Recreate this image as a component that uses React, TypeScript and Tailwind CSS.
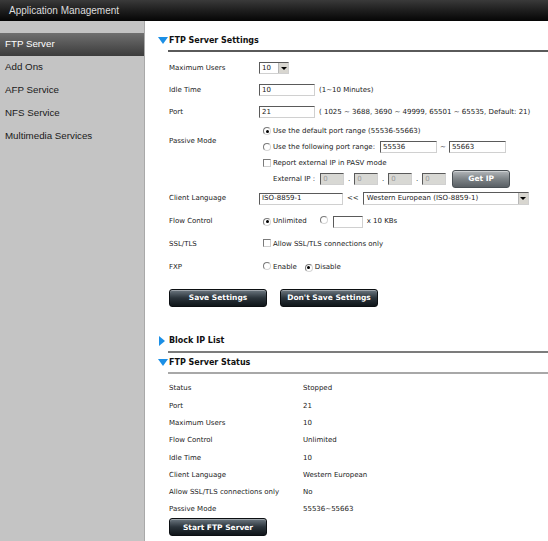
import React from "react";

const Radio = ({ checked }: { checked?: boolean }) => (
  <span className="inline-flex w-[8px] h-[8px] rounded-full border border-t-[#7a7a7a] border-l-[#7a7a7a] border-r-[#d6d6d6] border-b-[#d6d6d6] bg-white items-center justify-center shrink-0">
    {checked && <span className="w-[3px] h-[3px] rounded-full bg-black" />}
  </span>
);

const Check = () => (
  <span className="inline-block w-[8px] h-[8px] border border-t-[#7a7a7a] border-l-[#7a7a7a] border-r-[#cfcfcf] border-b-[#cfcfcf] bg-white shrink-0" />
);

const Input = ({ w, value, disabled }: { w: string; value: string; disabled?: boolean }) => (
  <div
    className={
      "h-[12px] border border-t-[#5a5a5a] border-l-[#5a5a5a] border-r-[#d0d0d0] border-b-[#d0d0d0] flex items-center pl-[2px] leading-none shrink-0 " +
      w +
      (disabled ? " bg-[#d8d8d4] text-[#9a9a9a]" : " bg-white text-[#1a1a1a]")
    }
  >
    {value}
  </div>
);

const Arrow = () => (
  <span className="w-[10px] h-full bg-[#d8d6d0] border-l border-[#b8b8b8] flex items-center justify-center shrink-0">
    <span className="w-0 h-0 border-l-[3px] border-r-[3px] border-t-[3px] border-l-transparent border-r-transparent border-t-black" />
  </span>
);

const DarkButton = ({ children, w }: { children: React.ReactNode; w: string }) => (
  <div
    className={
      "h-[18px] rounded-[3px] border border-[#0c0f12] bg-linear-to-b from-[#6e7982] via-[#2b343b] to-[#10161a] text-white font-bold text-[7.5px] flex items-center justify-center shadow-[inset_0_1px_0_rgba(255,255,255,0.35)] shrink-0 " +
      w
    }
  >
    {children}
  </div>
);

const DownTri = () => (
  <span className="w-0 h-0 border-l-[5px] border-r-[5px] border-t-[7px] border-l-transparent border-r-transparent border-t-[#1b8fe6] mr-px" />
);

const RightTri = () => (
  <span className="w-0 h-0 border-t-[5px] border-b-[5px] border-l-[6px] border-t-transparent border-b-transparent border-l-[#1b8fe6] mr-[4px] ml-px" />
);

const Row = ({ label, h, children }: { label: string; h: string; children?: React.ReactNode }) => (
  <div className={"flex items-center " + h}>
    <div className="w-[90px] shrink-0">{label}</div>
    <div className="flex items-center">{children}</div>
  </div>
);

const StatusRow = ({ label, value }: { label: string; value: string }) => (
  <div className="flex items-center h-[17.3px]">
    <div className="w-[134px] shrink-0">{label}</div>
    <div>{value}</div>
  </div>
);

export default function App() {
  const side = ["FTP Server", "Add Ons", "AFP Service", "NFS Service", "Multimedia Services"];
  return (
    <div className="w-[548px] h-[541px] bg-white flex flex-col overflow-hidden font-['DejaVu_Sans',sans-serif] text-[7px] text-[#1a1a1a]">
      <div className="h-[21px] shrink-0 bg-linear-to-b from-[#3a3a3a] to-[#060606] flex items-center pl-[9px] text-[10px] text-[#dcdcdc] font-['Liberation_Sans',sans-serif]">
        Application Management
      </div>
      <div className="flex flex-1 min-h-0">
        <aside className="w-[145px] shrink-0 bg-[#c4c4c4] border-r border-[#a9a9a9] pt-[12px] font-['Liberation_Sans',sans-serif] text-[9.75px] text-[#1a1a1a]">
          {side.map((s, i) => (
            <div
              key={s}
              className={
                "h-[23px] flex items-center pl-[5px] " +
                (i === 0 ? "bg-linear-to-b from-[#707070] to-[#3c3c3c] text-white" : "")
              }
            >
              {s}
            </div>
          ))}
        </aside>
        <main className="flex-1 min-w-0">
          <div className="mt-[10px] ml-[13px] h-[19px] flex items-center font-bold text-[8px] text-[#111]">
            <DownTri />
            FTP Server Settings
          </div>
          <div className="ml-[23px] h-[2px] bg-[#5a5a5a]" />

          <div className="pl-[24px] pt-[5px]">
            <Row label="Maximum Users" h="h-[22px]">
              <div className="h-[12px] w-[30px] border border-t-[#5a5a5a] border-l-[#5a5a5a] border-r-[#d0d0d0] border-b-[#d0d0d0] bg-white flex items-center">
                <span className="flex-1 pl-[2px]">10</span>
                <Arrow />
              </div>
            </Row>
            <Row label="Idle Time" h="h-[22px]">
              <Input w="w-[56px]" value="10" />
              <span className="ml-[4px]">(1~10 Minutes)</span>
            </Row>
            <Row label="Port" h="h-[22px]">
              <Input w="w-[56px]" value="21" />
              <span className="ml-[4px] whitespace-nowrap">( 1025 ~ 3688, 3690 ~ 49999, 65501 ~ 65535, Default: 21)</span>
            </Row>
            <div className="flex h-[64px]">
              <div className="w-[90px] shrink-0 pt-[13px]">Passive Mode</div>
              <div className="flex flex-col pl-[4px]">
                <div className="h-[16px] flex items-center">
                  <Radio checked />
                  <span className="ml-[2px]">Use the default port range (55536-55663)</span>
                </div>
                <div className="h-[16px] flex items-center">
                  <Radio />
                  <span className="ml-[2px]">Use the following port range:</span>
                  <div className="ml-[5px]"><Input w="w-[57px]" value="55536" /></div>
                  <span className="mx-[3px]">~</span>
                  <Input w="w-[57px]" value="55663" />
                </div>
                <div className="h-[16px] flex items-center">
                  <Check />
                  <span className="ml-[2px]">Report external IP in PASV mode</span>
                </div>
                <div className="h-[16px] flex items-center pl-[10px]">
                  <span>External IP :</span>
                  <div className="ml-[5px] flex items-center">
                    <Input w="w-[24px]" value="0" disabled />
                    <span className="w-[10px] text-center">.</span>
                    <Input w="w-[24px]" value="0" disabled />
                    <span className="w-[10px] text-center">.</span>
                    <Input w="w-[24px]" value="0" disabled />
                    <span className="w-[10px] text-center">.</span>
                    <Input w="w-[24px]" value="0" disabled />
                  </div>
                  <div className="ml-[6px] w-[58px] h-[18px] rounded-[3px] border border-[#4a5055] bg-linear-to-b from-[#b3b7ba] via-[#7d8387] to-[#5a6065] text-white font-bold text-[7.5px] flex items-center justify-center shadow-[inset_0_1px_0_rgba(255,255,255,0.4)]">
                    Get IP
                  </div>
                </div>
              </div>
            </div>
            <Row label="Client Language" h="h-[23px]">
              <Input w="w-[84px]" value="ISO-8859-1" />
              <span className="ml-[4px] mr-[4px]">&lt;&lt;</span>
              <div className="h-[13px] w-[166px] border border-t-[#5a5a5a] border-l-[#5a5a5a] border-r-[#d0d0d0] border-b-[#d0d0d0] bg-white flex items-center">
                <span className="flex-1 pl-[3px]">Western European (ISO-8859-1)</span>
                <Arrow />
              </div>
            </Row>
            <Row label="Flow Control" h="h-[23px]">
              <span className="ml-[4px]"><Radio checked /></span>
              <span className="ml-[2px]">Unlimited</span>
              <span className="ml-[13px]"><Radio /></span>
              <div className="ml-[5px]"><Input w="w-[30px]" value="" /></div>
              <span className="ml-[4px]">x 10 KBs</span>
            </Row>
            <Row label="SSL/TLS" h="h-[23px]">
              <span className="ml-[4px]"><Check /></span>
              <span className="ml-[2px]">Allow SSL/TLS connections only</span>
            </Row>
            <Row label="FXP" h="h-[23px]">
              <span className="ml-[4px]"><Radio /></span>
              <span className="ml-[2px]">Enable</span>
              <span className="ml-[8px]"><Radio checked /></span>
              <span className="ml-[2px]">Disable</span>
            </Row>
            <div className="flex gap-[13px] mt-[10px]">
              <DarkButton w="w-[98px]">Save Settings</DarkButton>
              <DarkButton w="w-[98px]">Don't Save Settings</DarkButton>
            </div>
          </div>

          <div className="mt-[24px] ml-[13px] h-[20px] flex items-center font-bold text-[8px] text-[#111]">
            <RightTri />
            Block IP List
          </div>
          <div className="ml-[23px] h-[2px] bg-[#7c7c7c]" />
          <div className="ml-[13px] h-[19px] flex items-center font-bold text-[8px] text-[#111]">
            <DownTri />
            FTP Server Status
          </div>
          <div className="ml-[23px] h-[2px] bg-[#a8a8a8]" />

          <div className="pl-[24px] pt-[6px]">
            <StatusRow label="Status" value="Stopped" />
            <StatusRow label="Port" value="21" />
            <StatusRow label="Maximum Users" value="10" />
            <StatusRow label="Flow Control" value="Unlimited" />
            <StatusRow label="Idle Time" value="10" />
            <StatusRow label="Client Language" value="Western European" />
            <StatusRow label="Allow SSL/TLS connections only" value="No" />
            <StatusRow label="Passive Mode" value="55536~55663" />
            <DarkButton w="w-[98px]">Start FTP Server</DarkButton>
          </div>
        </main>
      </div>
    </div>
  );
}
